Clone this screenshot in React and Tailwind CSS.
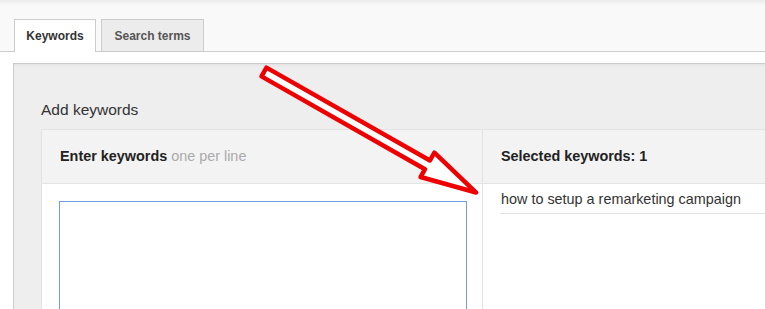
import React from 'react';

const Arrow = () => (
  <svg className="absolute left-0 top-0 pointer-events-none" width="765" height="309" viewBox="0 0 765 309">
    <g transform="translate(264,72) rotate(29.6)">
      <polygon
        points="0,-5 188,-5 188,-14 244,0 188,14 188,5 0,5"
        fill="#ffffff"
        stroke="#ee0000"
        strokeWidth="4.5"
        strokeLinejoin="round"
      />
    </g>
  </svg>
);

const App = () => {
  return (
    <div className="relative w-[765px] h-[309px] overflow-hidden bg-white font-['Liberation_Sans',Arial,sans-serif] text-[#333]">
      {/* tab strip */}
      <div className="h-[52px] bg-[#f9f9f9] border-b border-[#cccccc] shadow-[inset_0_5px_4px_-3px_rgba(0,0,0,0.07)] flex items-end pl-[14px] gap-[5px]">
        <div className="h-[33px] w-[82px] -mb-px bg-white border border-b-0 border-[#cccccc] flex items-center justify-center text-[12px] font-bold text-[#333]">
          Keywords
        </div>
        <div className="h-[32px] w-[103px] bg-[#ececec] border border-b-0 border-[#cccccc] flex items-center justify-center text-[12px] font-bold text-[#555]">
          Search terms
        </div>
      </div>

      <div className="pt-[11px] pl-[13px]">
        <div className="h-[260px] bg-[#eeeeee] border-l border-t border-[#cccccc] shadow-[inset_0_3px_3px_-2px_rgba(0,0,0,0.06)] pl-[27px] pt-[36px]">
          <div className="h-[20px] leading-[20px] text-[15.5px] text-[#333]">Add keywords</div>

          <div className="mt-[9px] flex border-l border-t border-[#e3e3e3] h-[200px]">
            <div className="w-[441px] border-r border-[#e3e3e3] flex flex-col">
              <div className="shrink-0 h-[54px] bg-[#f3f3f3] border-b border-[#e3e3e3] flex items-center pl-[18px] text-[14.4px]">
                <span className="font-bold text-[#222]">Enter keywords</span>
                <span className="ml-[4px] text-[#aaaaaa]">one per line</span>
              </div>
              <div className="flex-1 bg-white pl-[17px] pt-[17px]">
                <div className="w-[408px] h-[140px] border border-[#6f9ee6] bg-white"></div>
              </div>
            </div>
            <div className="flex-1 flex flex-col">
              <div className="shrink-0 h-[54px] bg-[#f3f3f3] border-b border-[#e3e3e3] flex items-center pl-[18px] text-[14.4px] font-bold text-[#222]">
                Selected keywords: 1
              </div>
              <div className="flex-1 bg-white pl-[17px]">
                <div className="h-[30px] pt-[3px] border-b border-[#e3e3e3] flex items-center pl-px text-[14.4px] text-[#333]">
                  how to setup a remarketing campaign
                </div>
              </div>
            </div>
          </div>
        </div>
      </div>

      <Arrow />
    </div>
  );
};

export default App;
